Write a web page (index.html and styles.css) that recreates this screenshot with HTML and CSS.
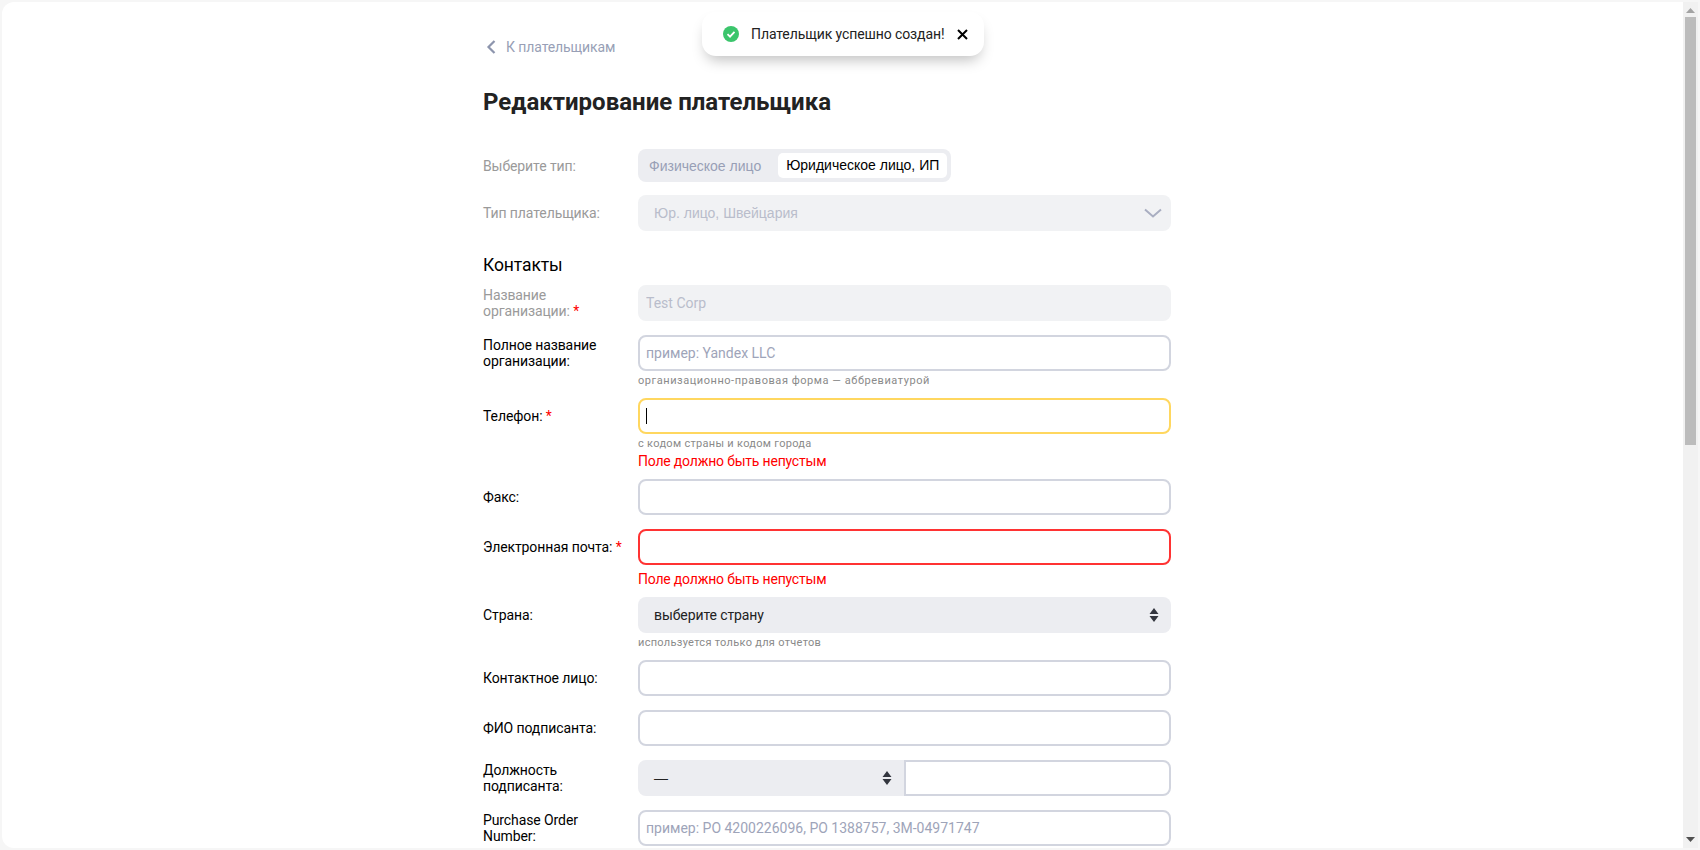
FILE: index.html
```html
<!DOCTYPE html>
<html lang="ru">

<head>
    <meta charset="utf-8">
    <title>Редактирование плательщика</title>
    <link rel="stylesheet" href="styles.css">
</head>

<body>
    <div class="panel">
        <main class="page">
            <div class="content">
                <a class="back" href="#">
                    <svg class="back-icon" width="10" height="14" viewBox="0 0 10 14">
                        <path d="M8.5 1 2.5 7 8.5 13" fill="none" stroke="#8d95ad" stroke-width="2.2" />
                    </svg>
                    К плательщикам
                </a>
                <h1>Редактирование плательщика</h1>

                <div class="row row-type">
                    <div class="label disabled"><span>Выберите тип:</span></div>
                    <div class="segment">
                        <span class="segment-item">Физическое лицо</span>
                        <span class="segment-item active">Юридическое лицо, ИП</span>
                    </div>
                </div>

                <div class="row row-kind">
                    <div class="label disabled"><span>Тип плательщика:</span></div>
                    <div class="control">
                        <div class="combo">
                            Юр. лицо, Швейцария
                            <svg width="18" height="10" viewBox="0 0 18 10">
                                <path d="M1 1.5 9 8.5 17 1.5" fill="none" stroke="#a9aec1" stroke-width="2" />
                            </svg>
                        </div>
                    </div>
                </div>

                <h2>Контакты</h2>

                <div class="row">
                    <div class="label disabled"><span>Название организации: <span class="req">*</span></span></div>
                    <div class="control"><input class="field field-off" value="Test Corp" disabled></div>
                </div>

                <div class="row noted">
                    <div class="label"><span>Полное название организации:</span></div>
                    <div class="control">
                        <input class="field" placeholder="пример: Yandex LLC">
                        <div class="hint hint-wide">организационно-правовая форма — аббревиатурой</div>
                    </div>
                </div>

                <div class="row noted">
                    <div class="label"><span>Телефон: <span class="req">*</span></span></div>
                    <div class="control">
                        <div class="field field-focus"><span class="caret"></span></div>
                        <div class="hint">с кодом страны и кодом города</div>
                        <div class="error">Поле должно быть непустым</div>
                    </div>
                </div>

                <div class="row">
                    <div class="label"><span>Факс:</span></div>
                    <div class="control"><input class="field"></div>
                </div>

                <div class="row noted">
                    <div class="label"><span>Электронная почта: <span class="req">*</span></span></div>
                    <div class="control">
                        <input class="field field-bad">
                        <div class="error">Поле должно быть непустым</div>
                    </div>
                </div>

                <div class="row noted">
                    <div class="label"><span>Страна:</span></div>
                    <div class="control">
                        <div class="select">
                            выберите страну
                            <svg class="updown" width="10" height="14" viewBox="0 0 10 14">
                                <path d="M5 0 9.5 6H.5zM5 14 .5 8h9z" fill="#33363f" />
                            </svg>
                        </div>
                        <div class="hint">используется только для отчетов</div>
                    </div>
                </div>

                <div class="row">
                    <div class="label"><span>Контактное лицо:</span></div>
                    <div class="control"><input class="field"></div>
                </div>

                <div class="row">
                    <div class="label"><span>ФИО подписанта:</span></div>
                    <div class="control"><input class="field"></div>
                </div>

                <div class="row">
                    <div class="label"><span>Должность подписанта:</span></div>
                    <div class="control pair">
                        <div class="select select-short">
                            <span class="dash">—</span>
                            <svg class="updown" width="10" height="14" viewBox="0 0 10 14">
                                <path d="M5 0 9.5 6H.5zM5 14 .5 8h9z" fill="#33363f" />
                            </svg>
                        </div>
                        <input class="field field-joined">
                    </div>
                </div>

                <div class="row">
                    <div class="label"><span>Purchase Order Number:</span></div>
                    <div class="control">
                        <input class="field" placeholder="пример: PO 4200226096, PO 1388757, 3M-04971747">
                    </div>
                </div>
            </div>
        </main>

        <div class="scrollbar">
            <svg class="arrow" width="9" height="5" viewBox="0 0 9 5"><path d="M4.5 0 9 5H0z" fill="#a3a3a3" /></svg>
            <div class="track"><div class="thumb"></div></div>
            <svg class="arrow" width="9" height="5" viewBox="0 0 9 5"><path d="M4.5 5 0 0h9z" fill="#505050" /></svg>
        </div>

        <div class="toast">
            <svg width="16" height="16" viewBox="0 0 16 16">
                <circle cx="8" cy="8" r="8" fill="#3bc56c" />
                <path d="M4.5 8.2 7 10.6 11.5 5.8" fill="none" stroke="#fff" stroke-width="1.8" />
            </svg>
            <span class="toast-text">Плательщик успешно создан!</span>
            <svg width="11" height="11" viewBox="0 0 11 11">
                <path d="M1 1 10 10M10 1 1 10" fill="none" stroke="#000" stroke-width="2" />
            </svg>
        </div>
    </div>
</body>

</html>
```

FILE: styles.css
```css
:root {
    --bg-color: #f6f6f6;
    --fg-color: #000;
    --muted-color: #9a9a9a;
    --link-color: #989fb6;
    --border-color: #d2d5df;
    --select-color: #ecedf1;
    --off-color: #f1f2f4;
    --wrong-color: #f00;
}

* {
    margin: 0;
    padding: 0;
    box-sizing: border-box;
}

html,
body {
    height: 100%;
    overflow: hidden;
}

body {
    font-family: Roboto, sans-serif;
    font-size: 14px;
    line-height: 16px;
    letter-spacing: -0.1px;
    color: var(--fg-color);
    background-color: var(--bg-color);
    padding: 2px;
}

.panel {
    position: relative;
    height: 100%;
    display: flex;
    background: #fff;
    border-radius: 12px 0 0 12px;
    overflow: hidden;
}

.page {
    flex-grow: 1;
    display: flex;
    justify-content: center;
    overflow: hidden;
}

.content {
    width: 719px;
    padding: 36px 31px 0 0;
}

.back {
    display: flex;
    align-items: center;
    gap: 10px;
    height: 18px;
    color: var(--link-color);
    text-decoration: none;
}

.back-icon {
    margin-left: 3px;
}

h1 {
    font-size: 24px;
    line-height: 32px;
    font-weight: 700;
    letter-spacing: 0;
    color: #222;
    margin: 30px 0 31px;
}

h2 {
    font-size: 17.5px;
    line-height: 24px;
    font-weight: 400;
    margin: 22px 0 8px;
}

.row {
    display: flex;
    margin-bottom: 14px;
}

.row.noted {
    margin-bottom: 10px;
}

.label {
    width: 155px;
    flex-shrink: 0;
    align-self: flex-start;
    min-height: 36px;
    padding-right: 10px;
    display: flex;
    align-items: center;
}

.label.disabled {
    color: var(--muted-color);
}

.req {
    color: var(--wrong-color);
}

.control {
    flex-grow: 1;
    min-width: 0;
}

.field {
    display: block;
    width: 100%;
    height: 36px;
    padding: 0 6px;
    border: 2px solid var(--border-color);
    border-radius: 8px;
    background: #fff;
    font-family: Roboto, sans-serif;
    font-size: 14px;
    outline: none;
}

.field::placeholder {
    color: #9ea4b9;
}

.field-off {
    border-color: var(--off-color);
    background: var(--off-color);
    color: #b9bdcb;
}

.field-focus {
    border-color: #ffd75f;
    display: flex;
    align-items: center;
}

.field-bad {
    border-color: #f33;
}

.caret {
    width: 1px;
    height: 16px;
    background: #000;
}

.hint {
    margin-top: 3px;
    font-size: 11px;
    line-height: 14px;
    letter-spacing: 0.3px;
    color: #8a8a8a;
}

.hint-wide {
    letter-spacing: 0.55px;
}

.error {
    margin: 5px 0 -1px;
    line-height: 18px;
    letter-spacing: -0.2px;
    color: var(--wrong-color);
}

.hint + .error {
    margin-top: 1px;
}

.row-type {
    margin-bottom: 13px;
    align-items: center;
}

.row-type .label {
    align-self: center;
    min-height: 33px;
}

.segment {
    display: flex;
    align-items: center;
    height: 33px;
    padding: 4px;
    border-radius: 8px;
    background: var(--select-color);
    font-family: "Liberation Sans", sans-serif;
    letter-spacing: 0;
}

.segment-item {
    padding: 0 7px;
    color: var(--link-color);
}

.segment-item.active {
    height: 25px;
    line-height: 25px;
    margin-left: 10px;
    padding: 0 8px;
    border-radius: 5px;
    background: #fff;
    color: #000;
}

.row-kind {
    margin-bottom: 0;
}

.combo {
    height: 36px;
    padding: 0 9px 0 16px;
    display: flex;
    align-items: center;
    justify-content: space-between;
    border-radius: 8px;
    background: var(--off-color);
    font-family: "Liberation Sans", sans-serif;
    letter-spacing: 0;
    color: #b9bdcb;
}

.select {
    height: 36px;
    padding: 0 12px 0 16px;
    display: flex;
    align-items: center;
    justify-content: space-between;
    border-radius: 8px;
    background: var(--select-color);
    color: #222;
}

.dash {
    font-family: "Liberation Sans", sans-serif;
}

.pair {
    display: flex;
}

.select-short {
    width: 266px;
    flex-shrink: 0;
    border-radius: 8px 0 0 8px;
}

.field-joined {
    flex-grow: 1;
    width: auto;
    min-width: 0;
    border-radius: 0 8px 8px 0;
}

.scrollbar {
    width: 15px;
    flex-shrink: 0;
    padding: 6px 0;
    display: flex;
    flex-direction: column;
    align-items: center;
    background: #f1f1f1;
}

.track {
    flex-grow: 1;
    width: 100%;
    padding: 4px 2px;
}

.thumb {
    height: 428px;
    background: #bcbcbc;
}

.toast {
    position: absolute;
    top: 10px;
    left: 700px;
    width: 282px;
    height: 44px;
    padding-left: 21px;
    display: flex;
    align-items: center;
    background: #fff;
    border-radius: 14px;
    box-shadow: 0 8px 14px -4px rgba(0, 0, 0, 0.25);
}

.toast-text {
    margin: 0 13px 0 12px;
    color: #222;
}
```
